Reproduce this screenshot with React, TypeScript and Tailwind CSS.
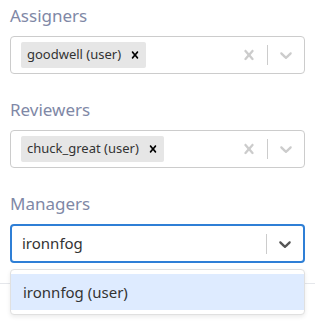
import React from 'react';

const CrossIcon = ({ size = 20, className = '' }: { size?: number; className?: string }) => (
  <svg width={size} height={size} viewBox="0 0 20 20" className={className} fill="currentColor">
    <path d="M14.348 14.849c-0.469 0.469-1.229 0.469-1.697 0l-2.651-3.030-2.651 3.029c-0.469 0.469-1.229 0.469-1.697 0-0.469-0.469-0.469-1.229 0-1.697l2.758-3.150-2.759-3.152c-0.469-0.469-0.469-1.228 0-1.697s1.228-0.469 1.697 0l2.652 3.031 2.651-3.031c0.469-0.469 1.228-0.469 1.697 0s0.469 1.229 0 1.697l-2.758 3.152 2.758 3.150c0.469 0.469 0.469 1.229 0 1.698z" />
  </svg>
);

const ChevronIcon = ({ className = '' }: { className?: string }) => (
  <svg width="20" height="20" viewBox="0 0 20 20" className={className} fill="currentColor">
    <path d="M4.516 7.548c0.436-0.446 1.043-0.481 1.576 0l3.908 3.747 3.908-3.747c0.533-0.481 1.141-0.446 1.574 0 0.436 0.445 0.408 1.197 0 1.615-0.406 0.418-4.695 4.502-4.695 4.502-0.217 0.223-0.502 0.335-0.787 0.335s-0.57-0.112-0.789-0.335c0 0-4.287-4.084-4.695-4.502s-0.436-1.17 0-1.615z" />
  </svg>
);

const Label = ({ children }: { children: React.ReactNode }) => (
  <div className="h-[24px] text-[17px] leading-[24px] text-[#7f88a6]">{children}</div>
);

const MultiSelect = ({ value }: { value: string }) => (
  <div className="mt-[8px] flex h-[38px] items-center rounded-[4px] border border-[#cccccc] bg-white">
    <div className="flex flex-1 items-center pl-[10px]">
      <div className="flex h-[26px] items-center rounded-[2px] bg-[#e6e6e6]">
        <span className="pl-[6px] pr-[3px] text-[13px] text-[#333333]">{value}</span>
        <span className="flex h-full items-center px-[4px] text-black">
          <CrossIcon size={14} />
        </span>
      </div>
    </div>
    <div className="flex items-center">
      <div className="px-[8px] text-[#cccccc]">
        <CrossIcon />
      </div>
      <div className="h-[20px] w-px bg-[#cccccc]" />
      <div className="px-[8px] text-[#cccccc]">
        <ChevronIcon />
      </div>
    </div>
  </div>
);

export default function App() {
  return (
    <div className="min-h-screen bg-white pt-[4px]" style={{ fontFamily: '"Noto Sans", "Open Sans", sans-serif' }}>
      <div className="px-[10px]">
        <Label>Assigners</Label>
        <MultiSelect value="goodwell (user)" />

        <div className="mt-[24px]">
          <Label>Reviewers</Label>
          <MultiSelect value="chuck_great (user)" />
        </div>

        <div className="relative mt-[24px]">
          <Label>Managers</Label>
          <div className="mt-[8px] flex h-[39px] items-center rounded-[4px] border-2 border-[#2f7fd6] bg-white">
            <div className="flex-1 pl-[10px] text-[15px] text-[#333333]">ironnfog</div>
            <div className="h-[20px] w-px bg-[#cccccc]" />
            <div className="px-[8px] text-[#555555]">
              <ChevronIcon />
            </div>
          </div>
          <div className="absolute left-0 right-0 top-[77px] z-10 rounded-[4px] border border-[#e0e0e0] bg-white py-[4px] shadow-[0_2px_4px_rgba(0,0,0,0.08)]">
            <div className="flex h-[36px] items-center bg-[#deebff] pl-[12px] text-[15px] text-[#333333]">
              ironnfog (user)
            </div>
          </div>
        </div>
      </div>
      <div className="mt-[20px] border-t border-[#e5e7eb]" />
    </div>
  );
}
